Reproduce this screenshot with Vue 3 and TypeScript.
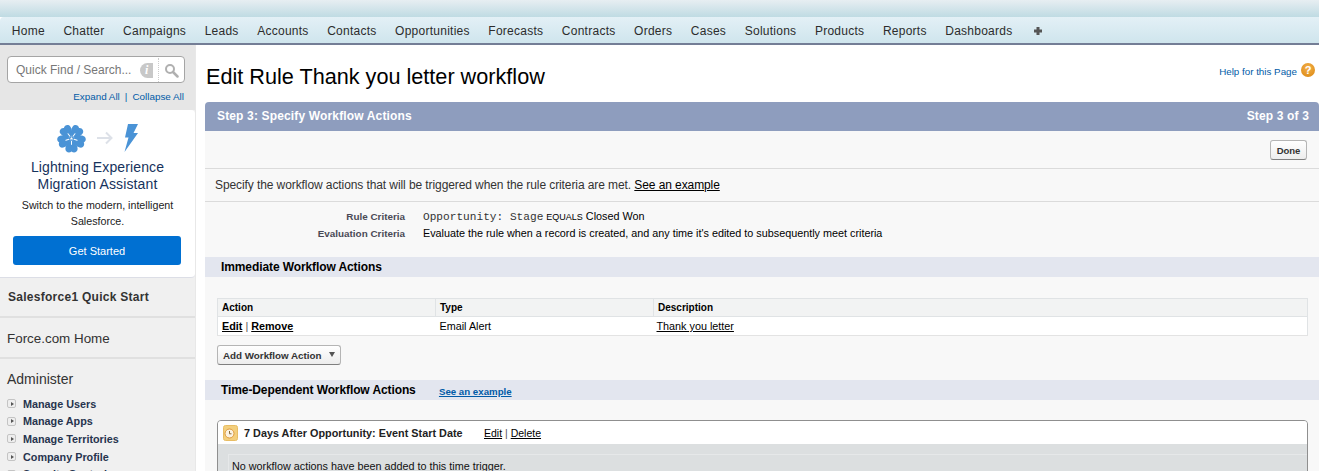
<script setup lang="ts">
const tabs = [
  "Home",
  "Chatter",
  "Campaigns",
  "Leads",
  "Accounts",
  "Contacts",
  "Opportunities",
  "Forecasts",
  "Contracts",
  "Orders",
  "Cases",
  "Solutions",
  "Products",
  "Reports",
  "Dashboards",
];

const adminLinks = [
  "Manage Users",
  "Manage Apps",
  "Manage Territories",
  "Company Profile",
  "Security Controls",
];

const petals = [36, 108, 180, 252, 324];
</script>

<template>
  <div class="page">
    <div class="top-band"></div>
    <nav class="tabs">
      <a v-for="tab in tabs" :key="tab" class="tab">{{ tab }}</a>
      <svg class="plus" width="10" height="10" viewBox="0 0 10 10">
        <path d="M3.500 1h3v2.500H9v3H6.500V9h-3V6.500H1v-3h2.500z" fill="#555" />
      </svg>
    </nav>

    <div class="body">
      <aside class="sidebar">
        <div class="search-area">
          <div class="search">
            <span class="search-text">Quick Find / Search...</span>
            <span class="info">i</span>
            <span class="search-btn">
              <svg width="15" height="15" viewBox="0 0 15 15">
                <circle cx="6" cy="6" r="4" fill="none" stroke="#b0b0b0" stroke-width="2" />
                <path d="M9 9l4.500 4.500" stroke="#b0b0b0" stroke-width="2.500" stroke-linecap="round" />
              </svg>
            </span>
          </div>
          <div class="expand">
            <a>Expand All</a><span class="sep">|</span><a>Collapse All</a>
          </div>
        </div>

        <div class="promo">
          <div class="promo-icons">
            <svg width="29" height="29" viewBox="1.500 1.500 27 27">
              <g v-for="a in petals" :key="a" :transform="`rotate(${a} 15 15)`">
                <path d="M15 14.400C11.400 11.500 9.200 8.500 9.300 5.200C9.400 2.400 12.800 0.800 15 3C17.200 0.800 20.600 2.400 20.700 5.200C20.800 8.500 18.600 11.500 15 14.400z" fill="#4a93d6" />
                <path d="M15 12.500L15 9.500" stroke="#fff" stroke-width="0.900" stroke-linecap="round" />
              </g>
            </svg>
            <svg width="16" height="14" viewBox="0 0 16 14">
              <path d="M0 7h14.500M9 1.500L14.500 7L9 12.500" fill="none" stroke="#dde1e8" stroke-width="2" />
            </svg>
            <svg width="14" height="28" viewBox="0 0 14 28">
              <path d="M4 0H14L9.500 9H14L0.500 28L4.500 13.500H1z" fill="#4a93d6" />
            </svg>
          </div>
          <div class="promo-title">Lightning Experience<br />Migration Assistant</div>
          <div class="promo-text">Switch to the modern, intelligent Salesforce.</div>
          <button class="get-started">Get Started</button>
        </div>

        <div class="side-section bold">Salesforce1 Quick Start</div>
        <div class="side-section">Force.com Home</div>
        <div class="admin">
          <div class="admin-title">Administer</div>
          <div v-for="link in adminLinks" :key="link" class="admin-link">
            <span class="toggle"></span>{{ link }}
          </div>
        </div>
      </aside>

      <main class="main">
        <header class="page-head">
          <h1>Edit Rule Thank you letter workflow</h1>
          <div class="help">
            <a class="help-link">Help for this Page</a>
            <span class="help-icon">?</span>
          </div>
        </header>

        <section class="panel">
          <div class="panel-head">
            <span>Step 3: Specify Workflow Actions</span>
            <span>Step 3 of 3</span>
          </div>
          <div class="buttons-row">
            <button class="btn done">Done</button>
          </div>
          <div class="intro">
            Specify the workflow actions that will be triggered when the rule criteria are met.
            <a class="plain-link">See an example</a>
          </div>
          <div class="criteria">
            <div class="crit-label">Rule Criteria</div>
            <div class="crit-value">
              <span class="mono">Opportunity: Stage</span> <span class="small">EQUALS</span> Closed Won
            </div>
            <div class="crit-label">Evaluation Criteria</div>
            <div class="crit-value">Evaluate the rule when a record is created, and any time it's edited to subsequently meet criteria</div>
          </div>

          <h3 class="sub-head">Immediate Workflow Actions</h3>
          <div class="table-wrap">
            <table class="list">
              <thead>
                <tr>
                  <th>Action</th>
                  <th>Type</th>
                  <th>Description</th>
                </tr>
              </thead>
              <tbody>
                <tr>
                  <td class="actions"><a class="plain-link">Edit</a> <span class="pipe">|</span> <a class="plain-link">Remove</a></td>
                  <td>Email Alert</td>
                  <td class="desc"><a class="plain-link">Thank you letter</a></td>
                </tr>
              </tbody>
            </table>
            <button class="btn add-btn">
              Add Workflow Action
              <span class="caret"></span>
            </button>
          </div>

          <h3 class="sub-head">
            Time-Dependent Workflow Actions
            <a class="example">See an example</a>
          </h3>
          <div class="trigger">
            <div class="trigger-head">
              <svg class="clock" width="15" height="16" viewBox="0 0 15 16">
                <rect x="0.500" y="0.500" width="14" height="15" rx="2" fill="#f3cf7d" stroke="#e8bd64" />
                <circle cx="6.500" cy="8.500" r="4.500" fill="#fbf3e2" stroke="#e09a3a" />
                <path d="M6.500 6v2.800h2" fill="none" stroke="#8a6a3a" />
              </svg>
              <span class="trigger-title">7 Days After Opportunity: Event Start Date</span>
              <span class="trigger-links"><a class="plain-link">Edit</a> <span class="pipe">|</span> <a class="plain-link">Delete</a></span>
            </div>
            <div class="trigger-body">
              <div class="trigger-note">No workflow actions have been added to this time trigger.</div>
            </div>
          </div>
        </section>
      </main>
    </div>
  </div>
</template>

<style>
html,
body {
  margin: 0;
  overflow: hidden;
}
</style>

<style scoped>
.page {
  width: 1319px;
  height: 471px;
  overflow: hidden;
  background: #fff;
  color: #000;
  font-family: "Liberation Sans", Arial, sans-serif;
  font-size: 11px;
}

.top-band {
  height: 17px;
  background: linear-gradient(#e7eef2, #bfdbe3);
}

.tabs {
  display: flex;
  align-items: center;
  padding-left: 2.500px;
  padding-top: 1px;
  height: 25px;
  background: linear-gradient(#e3f0f6, #cfe5ed);
  border-bottom: 2px solid #747e96;
  border-radius: 4px 0 0 0;
}

.tab {
  padding: 0 9.300px;
  font-size: 12px;
  letter-spacing: 0.25px;
  color: #2c2c2c;
  white-space: nowrap;
}

.plus {
  margin-left: 11px;
}

.body {
  display: flex;
  height: 426px;
}

.sidebar {
  width: 196px;
  flex: none;
  background: #f0f0f0;
  border-right: 1px solid #e8e8e8;
  box-sizing: border-box;
}

.search-area {
  height: 65px;
  background: #e6e6e6;
  padding: 11px 11px 0 7px;
  box-sizing: border-box;
}

.search {
  height: 27px;
  box-sizing: border-box;
  width: 178px;
  display: flex;
  align-items: center;
  background: #fff;
  border: 1px solid #a5a5a5;
  border-radius: 4px;
  padding: 1px 0 0 8px;
}

.search-text {
  font-size: 12px;
  color: #777;
  white-space: nowrap;
  width: 124px;
}

.info {
  width: 13px;
  height: 15px;
  overflow: hidden;
  margin-left: 1px;
  border-radius: 8px 0 0 8px;
  background: #c8c8c8;
  color: #fff;
  font: italic bold 12px/15px "Liberation Serif", serif;
  text-align: center;
}

.search-btn {
  display: flex;
  align-items: center;
  justify-content: center;
  height: 100%;
  width: 25px;
  margin-left: 5px;
  border-left: 1px dotted #ccc;
}

.expand {
  margin-top: 8px;
  text-align: right;
  font-size: 9.900px;
  line-height: 12px;
  color: #015ba7;
}

.sep {
  margin: 0 5px;
}

.promo {
  height: 168px;
  width: 195px;
  box-sizing: border-box;
  background: #fff;
  border-bottom: 1px solid #dcdee6;
  border-radius: 0 4px 4px 0;
  padding: 13px 13px 0;
  text-align: center;
  color: #16325c;
}

.promo-icons {
  display: flex;
  align-items: center;
  justify-content: center;
  gap: 11px;
  height: 30px;
  padding-right: 1px;
}

.promo-title {
  margin-top: 6px;
  font-size: 14px;
  letter-spacing: 0.12px;
  line-height: 17px;
}

.promo-text {
  margin-top: 4px;
  font-size: 10.700px;
  line-height: 16px;
  color: #222;
}

.get-started {
  display: block;
  width: 168px;
  height: 29px;
  margin-top: 7px;
  border: none;
  border-radius: 3px;
  background: #0070d2;
  color: #fff;
  font-family: inherit;
  font-size: 11px;
}

.side-section {
  height: 41px;
  box-sizing: border-box;
  border-bottom: 2px solid #e0e0e0;
  padding: 13px 0 0 7px;
  font-size: 13.400px;
  line-height: 15px;
  color: #333;
}

.side-section.bold {
  height: 40px;
  padding: 12px 0 0 8px;
  font-size: 12px;
  letter-spacing: 0.27px;
  font-weight: bold;
}

.admin {
  padding: 13px 0 0 7px;
}

.admin-title {
  font-size: 14px;
  color: #333;
  line-height: 15px;
  margin-bottom: 8px;
}

.admin-link {
  display: flex;
  align-items: center;
  gap: 7px;
  height: 17.600px;
  font-size: 10.800px;
  font-weight: bold;
  color: #27344e;
}

.toggle {
  width: 9px;
  height: 9px;
  flex: none;
  box-sizing: border-box;
  border: 1px solid #c4c4c4;
  border-radius: 2px;
  background: #eee;
  position: relative;
}

.toggle::after {
  content: "";
  position: absolute;
  left: 2.500px;
  top: 1.500px;
  border-left: 3px solid #555;
  border-top: 2px solid transparent;
  border-bottom: 2px solid transparent;
}

.main {
  flex: 1;
  min-width: 0;
  padding-left: 9px;
}

.page-head {
  height: 57px;
  display: flex;
  justify-content: space-between;
  align-items: flex-start;
}

h1 {
  margin: 19px 0 0 1px;
  font-size: 21.650px;
  line-height: 25px;
  font-weight: normal;
}

.help {
  display: flex;
  align-items: center;
  gap: 4px;
  margin: 18px 4px 0 0;
  font-size: 9.800px;
  color: #015ba7;
}

.help-link {
  margin-top: 2px;
}

.help-icon {
  width: 14px;
  height: 14px;
  border-radius: 50%;
  background: radial-gradient(circle at 50% 35%, #f4b04a, #d9860f);
  color: #fff;
  font-size: 11px;
  font-weight: bold;
  line-height: 14px;
  text-align: center;
}

.panel {
  background: #f8f8f8;
  border-radius: 4px 4px 0 0;
  height: 369px;
  overflow: hidden;
}

.panel-head {
  height: 29px;
  display: flex;
  justify-content: space-between;
  align-items: center;
  padding: 0 10px 2px 12px;
  box-sizing: border-box;
  background: #8e9dbe;
  color: #fff;
  font-size: 12px;
  letter-spacing: 0.15px;
  font-weight: bold;
}

.buttons-row {
  height: 38px;
  box-sizing: border-box;
  display: flex;
  justify-content: flex-end;
  align-items: flex-start;
  padding: 9px 12px 0 0;
  border-bottom: 1px solid #dbdbdb;
}

.btn {
  height: 20px;
  border: 1px solid #b5b5b5;
  border-bottom-color: #7f7f7f;
  border-radius: 3px;
  background: linear-gradient(#fff, #ededed);
  color: #333;
  font-family: inherit;
  font-size: 9.800px;
  font-weight: bold;
}

.done {
  width: 37px;
  padding: 0;
  font-size: 9.500px;
}

.intro {
  height: 33px;
  box-sizing: border-box;
  padding: 9px 10px 0;
  border-bottom: 1px solid #dbdbdb;
  font-size: 12px;
  letter-spacing: -0.09px;
  line-height: 15px;
  color: #333;
}

.plain-link {
  color: #000;
  text-decoration: underline;
}

.criteria {
  display: grid;
  grid-template-columns: 200px 1fr;
  column-gap: 18px;
  grid-auto-rows: 17px;
  padding-top: 6px;
  height: 55px;
  box-sizing: border-box;
  line-height: 17px;
  font-size: 10.800px;
}

.crit-label {
  text-align: right;
  font-weight: bold;
  color: #4a4a56;
  font-size: 9.900px;
}

.crit-value {
  color: #000;
}

.mono {
  font-family: "Liberation Mono", monospace;
  font-size: 11.150px;
  color: #333;
}

.small {
  font-size: 9px;
}

.sub-head {
  margin: 0;
  height: 20px;
  padding-left: 16px;
  background: #e3e6ef;
  font-size: 12px;
  letter-spacing: -0.1px;
  line-height: 21px;
}

.table-wrap {
  padding: 21px 11px 0 12px;
  height: 103px;
  box-sizing: border-box;
}

.list {
  width: 100%;
  border-collapse: collapse;
  table-layout: fixed;
  background: #fff;
  font-size: 10.800px;
  border: 1px solid #e0e3e5;
}

.list th {
  height: 18px;
  padding: 0 4px;
  box-sizing: border-box;
  background: #f2f3f3;
  border: 1px solid #e0e3e5;
  text-align: left;
  font-size: 10px;
  color: #000;
}

.list th:nth-child(1) {
  width: 218px;
}

.list th:nth-child(2) {
  width: 218px;
}

.list td {
  height: 19px;
  padding: 0 4px;
  box-sizing: border-box;
  border-bottom: 1px solid #e3e3e3;
}

.list td.desc {
  padding-left: 3px;
}

.actions .plain-link {
  font-weight: bold;
}

.pipe {
  color: #555;
}

.add-btn {
  margin-top: 9px;
  display: flex;
  align-items: center;
  gap: 7px;
  padding: 0 5px;
}

.caret {
  border-top: 5px solid #555;
  border-left: 3.500px solid transparent;
  border-right: 3.500px solid transparent;
  margin-bottom: 2px;
}

.example {
  margin-left: 20px;
  font-size: 9.700px;
  letter-spacing: 0;
  color: #015ba7;
  text-decoration: underline;
  position: relative;
  top: 1px;
}

.trigger {
  margin: 20px 11px 0 12px;
  border: 1px solid #8f8f8f;
  border-radius: 4px 4px 0 0;
  background: #dcdfe0;
  height: 120px;
}

.trigger-head {
  height: 23px;
  display: flex;
  align-items: center;
  padding-left: 5px;
  background: #fff;
  border-radius: 3px 3px 0 0;
}

.clock {
  flex: none;
}

.trigger-title {
  margin-left: 6px;
  width: 240px;
  font-size: 10.800px;
  letter-spacing: 0.03px;
  font-weight: bold;
  color: #222;
  white-space: nowrap;
}

.trigger-links {
  font-size: 10.500px;
}

.trigger-body {
  padding: 10px 0 0 10px;
}

.trigger-note {
  padding: 5px 4px 4px 3px;
  border-top: 1px solid #e6e8e9;
  border-left: 1px solid #e6e8e9;
  font-size: 10.800px;
  color: #111;
}
</style>
